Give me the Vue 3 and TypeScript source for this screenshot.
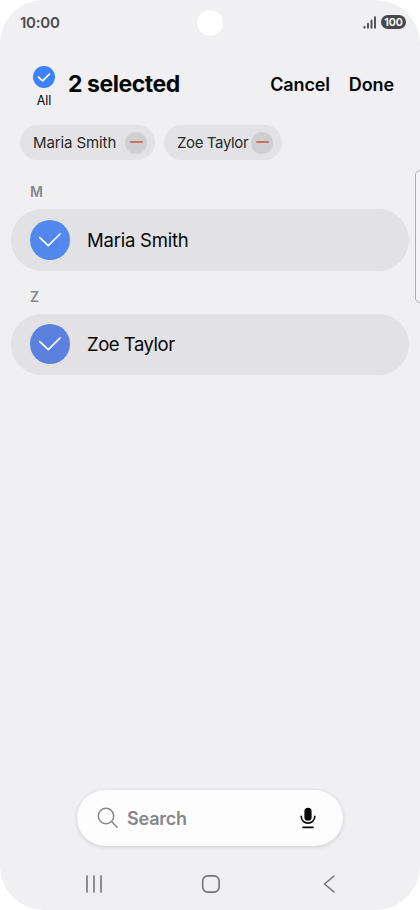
<script setup lang="ts">
interface Contact {
  name: string
  initial: string
  tone: string
}

const contacts: Contact[] = [
  { name: 'Maria Smith', initial: 'M', tone: 'sky' },
  { name: 'Zoe Taylor', initial: 'Z', tone: 'indigo' },
]
</script>

<template>
  <main class="screen">
    <div class="camera"></div>
    <div class="edge-panel"></div>

    <div class="status">
      <span class="clock">10:00</span>
      <div class="status-right">
        <svg class="signal" viewBox="0 0 14 14" width="14" height="14">
          <path d="M1.5 11.8V12.8M5 8.8V12.8M8.5 5.5V12.8M12 2.2V12.8" />
        </svg>
        <span class="battery">100</span>
      </div>
    </div>

    <header class="header">
      <div class="all">
        <svg viewBox="0 0 22 22" width="22" height="22">
          <circle cx="11" cy="11" r="11" fill="#3d83f7" />
          <path d="M5.5 11.1L9.6 14.9L16.4 8.2" fill="none" stroke="#fff" stroke-width="1.7" stroke-linecap="round" stroke-linejoin="round" />
        </svg>
        <span class="all-label">All</span>
      </div>
      <h1 class="title">{{ contacts.length }} selected</h1>
      <button class="action cancel">Cancel</button>
      <button class="action done">Done</button>
    </header>

    <div class="chips">
      <div v-for="c in contacts" :key="c.name" class="chip" :class="c.tone">
        <span class="chip-name">{{ c.name }}</span>
        <span class="remove"><i></i></span>
      </div>
    </div>

    <section v-for="c in contacts" :key="c.initial" class="group">
      <h2 class="letter">{{ c.initial }}</h2>
      <div class="row">
        <div class="avatar" :class="c.tone">
          <span class="initial">{{ c.initial }}</span>
          <svg viewBox="0 0 40 40" width="40" height="40">
            <path d="M9.8 17.7L18.3 25.7L30 14" />
          </svg>
        </div>
        <span class="name" :class="c.tone">{{ c.name }}</span>
      </div>
    </section>

    <div class="search">
      <svg class="lens" viewBox="0 0 22 22" width="22" height="22">
        <circle cx="9" cy="9" r="7.7" />
        <path d="M14.5 14.5L20.2 20.2" />
      </svg>
      <span class="placeholder">Search</span>
      <svg class="mic" viewBox="0 0 16 22" width="16" height="22">
        <rect x="4.4" y="0.8" width="7.2" height="13" rx="3.6" />
        <path d="M1.2 9.3C1.2 18.3 14.8 18.3 14.8 9.3M3 20.4H13" />
      </svg>
    </div>

    <nav class="nav">
      <svg viewBox="0 0 20 20" width="20" height="20"><path d="M3 2V18M10 2V18M17 2V18" /></svg>
      <svg viewBox="0 0 20 20" width="20" height="20"><rect x="1.7" y="1.9" width="16.4" height="16.2" rx="5" /></svg>
      <svg viewBox="0 0 20 20" width="20" height="20"><path d="M15 2L5.5 10L15 18" /></svg>
    </nav>
  </main>
</template>

<style>
body {
  background: #fff;
}
</style>

<style scoped>
.screen {
  position: relative;
  box-sizing: border-box;
  width: 420px;
  height: 910px;
  overflow: hidden;
  display: flex;
  flex-direction: column;
  border-radius: 44px;
  background: #f0f0f3;
  color: #050505;
  font-family: Inter, Roboto, sans-serif;
}
.camera {
  position: absolute;
  left: 196.5px;
  top: 9.5px;
  width: 26.5px;
  height: 26.5px;
  border-radius: 50%;
  background: #fff;
}
.edge-panel {
  position: absolute;
  left: 415px;
  top: 170px;
  box-sizing: border-box;
  width: 16px;
  height: 133px;
  border: 1px solid #acacae;
  border-radius: 5px;
  background: #f5f5f7;
}
.status {
  height: 44px;
  flex: none;
  display: flex;
  align-items: center;
  justify-content: space-between;
  padding: 0 14px 0 20px;
}
.clock {
  font-size: 15px;
  font-weight: 600;
  letter-spacing: -0.25px;
  color: #4c4c4e;
}
.status-right {
  display: flex;
  align-items: center;
  gap: 4px;
}
.signal path {
  fill: none;
  stroke: #4c4c4e;
  stroke-width: 1.9;
  stroke-linecap: round;
}
.battery {
  width: 25px;
  height: 14px;
  border-radius: 7px;
  background: #48484a;
  color: #f4f4f4;
  font-size: 10.5px;
  font-weight: 700;
  line-height: 15px;
  text-align: center;
}
.header {
  height: 81px;
  flex: none;
  display: flex;
  align-items: center;
  box-sizing: border-box;
  padding: 0 26px 2px 32px;
}
.all {
  width: 24px;
  margin-top: 7px;
  display: flex;
  flex-direction: column;
  align-items: center;
}
.all-label {
  margin-top: 5px;
  font-size: 12.5px;
  line-height: 16px;
  letter-spacing: -0.1px;
}
.title {
  margin: 0 auto 0 12px;
  font-size: 23px;
  font-weight: 700;
  line-height: 30px;
  letter-spacing: -0.45px;
  white-space: nowrap;
}
.action {
  padding: 2px 0 0;
  border: 0;
  background: none;
  color: #050505;
  font: 600 18px/24px Inter, Roboto, sans-serif;
  letter-spacing: -0.12px;
  white-space: nowrap;
}
.done {
  margin-left: 19px;
}
.chips {
  flex: none;
  display: flex;
  gap: 9px;
  padding-left: 20px;
}
.chip {
  box-sizing: border-box;
  width: 135px;
  height: 35px;
  padding: 0 8px 0 13px;
  display: flex;
  align-items: center;
  justify-content: space-between;
  border-radius: 18px;
  background: #e3e3e5;
}
.chip.indigo {
  width: 118px;
  padding-right: 9px;
}
.chip-name {
  color: #29292b;
  font-size: 15px;
  letter-spacing: -0.1px;
  white-space: nowrap;
}
.indigo .chip-name {
  letter-spacing: -0.38px;
}
.remove {
  width: 22px;
  height: 22px;
  flex: none;
  display: grid;
  place-items: center;
  border-radius: 50%;
  background: #cfcfd1;
}
.remove i {
  width: 13px;
  height: 2px;
  margin-bottom: 1px;
  border-radius: 1px;
  background: #cc716a;
}
.group {
  flex: none;
  padding: 0 11px;
}
.letter {
  box-sizing: border-box;
  height: 43px;
  margin: 0;
  padding: 4px 0 0 19px;
  font-size: 14px;
  font-weight: 600;
  line-height: 43px;
  color: #88888b;
}
.chips + .group .letter {
  height: 49px;
  padding-top: 10px;
}
.row {
  height: 61.5px;
  display: flex;
  align-items: center;
  border-radius: 31px;
  background: #e2e2e4;
}
.avatar {
  display: grid;
  place-items: center;
  width: 40px;
  height: 40px;
  margin-left: 19px;
  border-radius: 50%;
}
.avatar.sky {
  background: #5389ee;
}
.avatar.indigo {
  background: #5c80dd;
}
.avatar svg,
.avatar .initial {
  grid-area: 1 / 1;
}
.avatar .initial {
  padding-top: 2px;
  font-size: 19px;
  font-weight: 600;
  line-height: 24px;
  color: #5083ee;
}
.avatar.indigo .initial {
  color: #527fe4;
}
.avatar path {
  fill: none;
  stroke: #fff;
  stroke-width: 1.7;
  stroke-linecap: round;
  stroke-linejoin: round;
}
.name {
  margin-left: 17px;
  font-size: 18.5px;
  letter-spacing: -0.23px;
  white-space: nowrap;
}
.name.indigo {
  letter-spacing: -0.48px;
}
.search {
  box-sizing: border-box;
  width: 266px;
  height: 56px;
  flex: none;
  display: flex;
  align-items: center;
  margin: auto 0 0 77px;
  padding: 0 27px 0 20px;
  border-radius: 28px;
  background: #fdfdfe;
  box-shadow: 0 1px 4px rgba(0, 0, 0, 0.16);
}
.lens {
  fill: none;
  stroke: #868688;
  stroke-width: 1.5;
  stroke-linecap: round;
}
.placeholder {
  margin: 0 auto 0 8px;
  color: #868688;
  font-size: 18px;
  font-weight: 600;
  letter-spacing: -0.2px;
}
.mic {
  fill: #080808;
}
.mic path {
  fill: none;
  stroke: #080808;
  stroke-width: 1.7;
  stroke-linecap: round;
}
.nav {
  height: 64px;
  flex: none;
  box-sizing: border-box;
  display: flex;
  justify-content: space-between;
  padding: 27.5px 81.5px 0 83.5px;
}
.nav svg {
  fill: none;
  stroke: #747477;
  stroke-width: 1.6;
  stroke-linecap: round;
  stroke-linejoin: round;
}
</style>
